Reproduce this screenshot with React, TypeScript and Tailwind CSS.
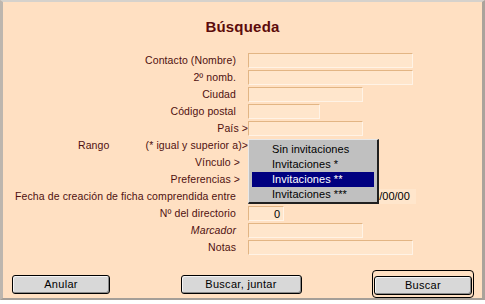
import React from 'react'

type Row = {
  label: React.ReactNode
  pr: string
  field?: React.ReactNode
}

function Field({ w, children }: { w: string; children?: React.ReactNode }) {
  return (
    <div
      className={`${w} h-[15px] bg-[#ffe6cc] border-t border-l border-[#e2b584] border-r-[#fff3e6] border-b-[#fff3e6] border-r border-b text-[11px] leading-[13px] text-black`}
    >
      {children}
    </div>
  )
}

function Btn({ label, w }: { label: string; w: string }) {
  return (
    <button
      className={`${w} h-[19px] rounded-[3px] border border-black bg-[#d8d8d8] shadow-[inset_1px_1px_0_#f4f4f4,inset_-1px_-1px_0_#8a8a8a] text-[11px] leading-[15px] tracking-[0.3px] text-black`}
    >
      {label}
    </button>
  )
}

export default function App() {
  const rows: Row[] = [
    { label: 'Contacto (Nombre)', pr: 'pr-[12px]', field: <Field w="w-[165px]" /> },
    { label: '2º nomb.', pr: 'pr-[12px]', field: <Field w="w-[165px]" /> },
    { label: 'Ciudad', pr: 'pr-[12px]', field: <Field w="w-[115px]" /> },
    { label: 'Código postal', pr: 'pr-[12px]', field: <Field w="w-[72px]" /> },
    { label: 'País >', pr: 'pr-0', field: <Field w="w-[115px]" /> },
    {
      label: (
        <span className="flex w-full">
          <span className="pl-[78px]">Rango</span>
          <span className="ml-auto">(* igual y superior a)&gt;</span>
        </span>
      ),
      pr: 'pr-0',
    },
    { label: 'Vínculo >', pr: 'pr-[8px]' },
    { label: 'Preferencias >', pr: 'pr-[8px]' },
    {
      label: 'Fecha de creación de ficha comprendida entre',
      pr: 'pr-[12px]',
      field: (
        <div className="flex">
          <Field w="w-[110px]" />
          <div className="w-[58px] h-[15px] bg-[#ffe6cc] text-[11px] leading-[14px] text-black pl-[9px]">
            00/00/00
          </div>
        </div>
      ),
    },
    {
      label: 'Nº del directorio',
      pr: 'pr-[12px]',
      field: (
        <Field w="w-[36px]">
          <div className="text-right pr-[3px] leading-[14px]">0</div>
        </Field>
      ),
    },
    { label: <i>Marcador</i>, pr: 'pr-[12px]', field: <Field w="w-[115px]" /> },
    { label: 'Notas', pr: 'pr-[12px]', field: <Field w="w-[165px]" /> },
  ]

  return (
    <div className="w-[485px] h-[304px] bg-white" style={{ fontFamily: '"Liberation Sans", Arial, sans-serif' }}>
      <div className="relative w-[485px] h-[300px] border-l-[3px] border-t-[2px] border-r-[3px] border-b-[2px] border-l-[#bdb6ae] border-t-[#d6d2cc] border-r-[#aaa39b] border-b-[#a59f98] bg-[#ffe0c2]">
        <div className="h-[50px] flex items-center justify-center pt-[1px]">
          <h1 className="text-[15px] font-bold tracking-[0.2px] text-[#5c0b0b]">Búsqueda</h1>
        </div>

        <div className="flex flex-col -ml-[3px]">
          {rows.map((r, i) => (
            <div key={i} className="h-[17px] flex items-center">
              <div
                className={`w-[248px] shrink-0 flex justify-end whitespace-nowrap text-[10.5px] tracking-[0.1px] text-[#4f1010] ${r.pr}`}
              >
                {r.label}
              </div>
              <div>{r.field}</div>
            </div>
          ))}
        </div>

        {/* Dropdown menu */}
        <div className="absolute left-[245px] top-[137px] w-[131px] h-[65px] bg-[#c0c0c0] border-t border-l border-[#e8e8e8] border-r-2 border-b-2 border-r-[#202020] border-b-[#202020] pt-[2px] text-[11px] tracking-[0.05px] text-black">
          {['Sin invitaciones', 'Invitaciones *', 'Invitaciones **', 'Invitaciones ***'].map((t, i) => (
            <div
              key={t}
              className={`h-[15px] mx-[3px] pl-[20px] leading-[15px] ${i === 2 ? 'bg-[#000080] text-white' : ''}`}
            >
              {t}
            </div>
          ))}
        </div>

        <div className="flex items-center justify-between mt-[14px] pl-[9px] pr-[8px]">
          <Btn label="Anular" w="w-[98px]" />
          <Btn label="Buscar, juntar" w="w-[121px]" />
          <div className="rounded-[4px] border border-black p-[1px]">
            <Btn label="Buscar" w="w-[98px]" />
          </div>
        </div>
      </div>
    </div>
  )
}
